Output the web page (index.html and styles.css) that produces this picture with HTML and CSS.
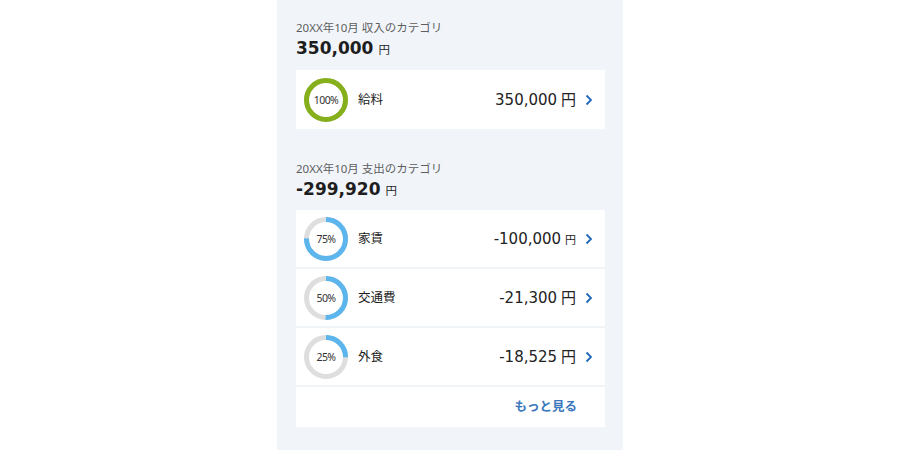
FILE: index.html
```html
<!DOCTYPE html>
<html lang="ja">
<head>
<meta charset="utf-8">
<link rel="stylesheet" href="styles.css">
</head>
<body>
<main class="column">
  <section class="section first">
    <div class="caption">20XX年10月 収入のカテゴリ</div>
    <div class="total"><span class="num">350,000</span><span class="yen">円</span></div>
    <div class="card">
      <div class="row tall">
        <svg class="donut" viewBox="0 0 44 44"><circle cx="22" cy="22" r="19.5" class="track"/><circle cx="22" cy="22" r="19.5" class="arc green" stroke-dasharray="122.5 200"/><text x="22" y="25.8" class="pct">100%</text></svg>
        <span class="name">給料</span>
        <span class="amount"><span class="num">350,000</span> 円</span>
        <svg class="chev" viewBox="0 0 8 12"><polyline points="1.5,1.5 6,6 1.5,10.5"/></svg>
      </div>
    </div>
  </section>
  <section class="section second">
    <div class="caption">20XX年10月 支出のカテゴリ</div>
    <div class="total"><span class="num">-299,920</span><span class="yen">円</span></div>
    <div class="card list">
      <div class="row">
        <svg class="donut" viewBox="0 0 44 44"><circle cx="22" cy="22" r="19.5" class="track"/><circle cx="22" cy="22" r="19.5" class="arc blue" stroke-dasharray="91.9 200"/><text x="22" y="25.8" class="pct">75%</text></svg>
        <span class="name">家賃</span>
        <span class="amount"><span class="num">-100,000</span> <span class="small">円</span></span>
        <svg class="chev" viewBox="0 0 8 12"><polyline points="1.5,1.5 6,6 1.5,10.5"/></svg>
      </div>
      <div class="row">
        <svg class="donut" viewBox="0 0 44 44"><circle cx="22" cy="22" r="19.5" class="track"/><circle cx="22" cy="22" r="19.5" class="arc blue" stroke-dasharray="61.3 200"/><text x="22" y="25.8" class="pct">50%</text></svg>
        <span class="name">交通費</span>
        <span class="amount"><span class="num">-21,300</span> 円</span>
        <svg class="chev" viewBox="0 0 8 12"><polyline points="1.5,1.5 6,6 1.5,10.5"/></svg>
      </div>
      <div class="row">
        <svg class="donut" viewBox="0 0 44 44"><circle cx="22" cy="22" r="19.5" class="track"/><circle cx="22" cy="22" r="19.5" class="arc blue" stroke-dasharray="30.6 200"/><text x="22" y="25.8" class="pct">25%</text></svg>
        <span class="name">外食</span>
        <span class="amount"><span class="num">-18,525</span> 円</span>
        <svg class="chev" viewBox="0 0 8 12"><polyline points="1.5,1.5 6,6 1.5,10.5"/></svg>
      </div>
      <div class="more-row"><a class="more">もっと見る</a></div>
    </div>
  </section>
</main>
</body>
</html>
```
FILE: styles.css
```css
html, body {
  margin: 0;
  padding: 0;
  background: #ffffff;
  font-family: "Noto Sans", "Noto Sans CJK JP", sans-serif;
  color: #222222;
}
.column {
  width: 346px;
  height: 450px;
  margin: 0 auto;
  background: #f1f5fa;
  box-sizing: border-box;
  padding: 20px 18px 0 19px;
}
.section.second {
  margin-top: 32px;
}
.caption {
  font-size: 11.5px;
  line-height: 16px;
  height: 16px;
  color: #5e5e5e;
  white-space: nowrap;
}
.total {
  display: flex;
  align-items: baseline;
  height: 24px;
  line-height: 24px;
  margin-bottom: 10px;
  color: #1e1e1e;
}
.second .total {
  margin-bottom: 9px;
}
.total .num {
  font-family: "DejaVu Sans", sans-serif;
  font-size: 17px;
  font-weight: 700;
}
.yen {
  font-size: 11.5px;
  margin-left: 5px;
}
.card {
  display: flex;
  flex-direction: column;
  gap: 2px;
  background: #f1f4f7;
}
.row {
  display: flex;
  align-items: center;
  height: 57px;
  background: #ffffff;
  padding: 0 12px 0 8px;
}
.row.tall {
  height: 59px;
}
.donut {
  width: 44px;
  height: 44px;
  flex: none;
}
.track {
  fill: none;
  stroke: #dedede;
  stroke-width: 5;
}
.arc {
  fill: none;
  stroke-width: 5;
  transform: rotate(-90deg);
  transform-origin: 22px 22px;
}
.arc.green { stroke: #86b01b; }
.arc.blue { stroke: #5cb5ec; }
.pct {
  font-family: "Noto Sans", sans-serif;
  font-size: 10.5px;
  text-anchor: middle;
  fill: #333333;
  letter-spacing: -0.6px;
}
.name {
  margin-left: 10px;
  font-size: 12.5px;
  line-height: 16px;
  color: #222222;
}
.amount {
  margin-left: auto;
  font-size: 15px;
  line-height: 20px;
  color: #222222;
  white-space: nowrap;
}
.amount .num {
  font-family: "DejaVu Sans", sans-serif;
  font-size: 15px;
}
.amount .small {
  font-size: 11px;
}
.chev {
  width: 8px;
  height: 12px;
  margin-left: 9px;
  flex: none;
}
.chev polyline {
  fill: none;
  stroke: #1f68b9;
  stroke-width: 1.8;
}
.more-row {
  display: flex;
  justify-content: flex-end;
  align-items: center;
  height: 40px;
  background: #ffffff;
  padding-right: 28px;
}
.more {
  font-size: 12.5px;
  line-height: 16px;
  font-weight: 700;
  color: #3a77bb;
}
```
